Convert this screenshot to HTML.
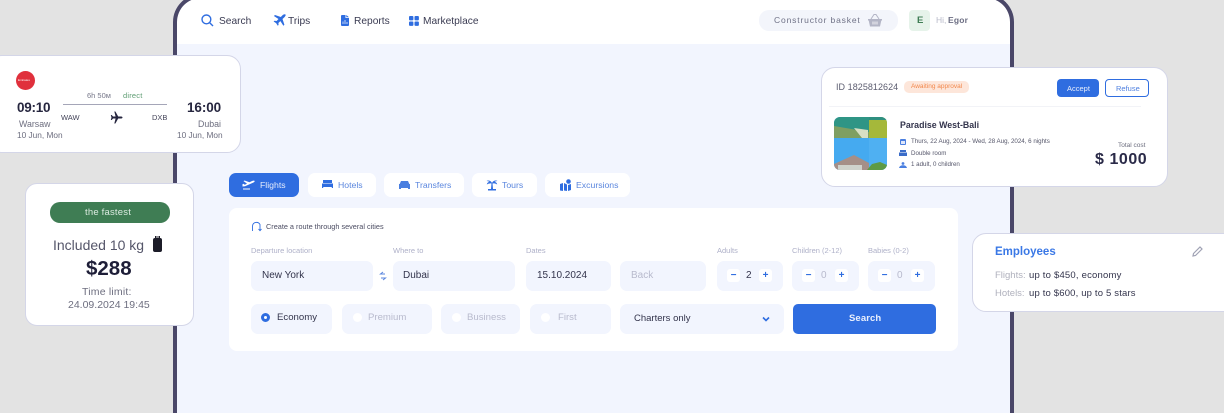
<!DOCTYPE html>
<html lang="en"><head><meta charset="utf-8"><title>Travel booking</title>
<style>
*{box-sizing:border-box;margin:0;padding:0}
html,body{width:1224px;height:413px;overflow:hidden;background:#e3e3e3}
body{position:relative;font-family:"Liberation Sans",sans-serif;color:#26263f}
#w{position:absolute;left:0;top:0;width:1224px;height:413px;overflow:hidden;filter:blur(.35px)}
.a{position:absolute}
.t{position:absolute;white-space:nowrap;line-height:1}
.box{position:absolute;background:#f2f5fe;border-radius:7px}
.card{position:absolute;background:#fff;border:1px solid #d4d6e8}
.tab{position:absolute;top:173px;height:24px;background:#fff;border-radius:7px}
.tl{position:absolute;white-space:nowrap;line-height:1;top:181px;font-size:8.700px;color:#5a86de}
.lb{position:absolute;white-space:nowrap;line-height:1;font-size:7.5px;color:#aeb0c8;top:247px}
.inp{position:absolute;white-space:nowrap;line-height:1;font-size:10px;color:#33344c}
.cl{font-size:9.6px;top:313px}
.sq{position:absolute;width:13px;height:13px;background:#fff;border-radius:3px;color:#2f6de0;font-size:10px;line-height:13px;text-align:center;font-weight:bold}
.rd{position:absolute;width:9px;height:9px;border-radius:50%;background:#fff;top:313px}
.nav{position:absolute;white-space:nowrap;line-height:1;top:17px;font-size:10.2px;color:#3a3b52}
svg{position:absolute;display:block}
</style></head><body><div id="w">

<!-- device frame -->
<div class="a" style="left:173px;top:-6px;width:841px;height:419px;background:#fff;border:4px solid #4a4768;border-bottom:0;border-radius:28px 28px 0 0"></div>
<div class="a" style="left:177px;top:44px;width:833px;height:369px;background:#f2f5fe"></div>

<!-- nav -->
<svg style="left:201px;top:14px" width="13" height="13" viewBox="0 0 13 13" fill="none" stroke="#2f6de0" stroke-width="1.4"><circle cx="5.4" cy="5.4" r="4.4"/><path d="M8.7 8.7L12 12"/></svg>
<div class="nav" style="left:219px">Search</div>
<svg style="left:273px;top:14px" width="13" height="13" viewBox="0 0 13 13" fill="#2f6de0"><path d="M12.5.5c-.8-.6-2-.2-3 .8L7.8 3 2 1 .9 2l4.6 3L3.6 7 1.5 6.7.6 7.5l2.5 1.6 1.7 2.7.8-.9L5.4 9l2-1.9 3 4.700 1-1.100L9.500 5l1.900-1.800c1-1 1.600-2.100 1.100-2.700z"/></svg>
<div class="nav" style="left:288px">Trips</div>
<svg style="left:341px;top:15px" width="8" height="11" viewBox="0 0 8 11" fill="#2f6de0"><path d="M1 0h3.500v3h3.500v7a1 1 0 0 1-1 1H1a1 1 0 0 1-1-1V1a1 1 0 0 1 1-1zM5.300 0L8 2.300H5.300z"/><path d="M2 9V6.500M4 9V5M6 9V7" stroke="#fff" stroke-width=".7"/></svg>
<div class="nav" style="left:354px">Reports</div>
<svg style="left:409px;top:16px" width="10" height="10" viewBox="0 0 10 10" fill="#2f6de0"><rect width="4.400" height="4.400" rx="1"/><rect x="5.500" width="4.400" height="4.400" rx="1"/><rect y="5.500" width="4.400" height="4.400" rx="1"/><rect x="5.500" y="5.500" width="4.400" height="4.400" rx="1"/></svg>
<div class="nav" style="left:423px">Marketplace</div>

<div class="a" style="left:759px;top:10px;width:139px;height:21px;background:#f3f5fb;border-radius:10px"></div>
<div class="t" style="left:774px;top:16px;font-size:8.500px;color:#6f7186;letter-spacing:.85px">Constructor basket</div>
<svg style="left:868px;top:14px" width="14" height="13" viewBox="0 0 14 13" fill="#b3b5c6"><path d="M0 5h14v1.500h-.7L12 12.500H2L.7 6.500H0z"/><path d="M3 5l3-4.500h2L11 5" fill="none" stroke="#b3b5c6"/><path d="M5 7.500v3M7 7.500v3M9 7.500v3" stroke="#fff" stroke-width=".8"/></svg>
<div class="a" style="left:909px;top:10px;width:21px;height:21px;background:#e6f3ea;border-radius:4px"></div>
<div class="t" style="left:917px;top:16px;font-size:9.500px;font-weight:bold;color:#3f7d54">E</div>
<div class="t" style="left:936px;top:16px;font-size:8.500px;color:#b9bbca">Hi,</div>
<div class="t" style="left:948px;top:16px;font-size:8.500px;font-weight:bold;color:#6c6e83;letter-spacing:.2px">Egor</div>

<!-- tabs -->
<div class="tab" style="left:229px;width:70px;background:#2f6de0"></div>
<svg style="left:242px;top:179px" width="13" height="11" viewBox="0 0 13 11" fill="#fff"><path d="M.5 7.500l2.500-.3 8.500-3.700c1-.5 1.500-1.200.9-1.700-.6-.4-1.600-.1-2.600.3L7.500 3.300 2.500 1.500l-1 .6 3.500 2.500L2.800 5.700 1.300 4.800l-.8.4zM1 9.500h7v1H1z"/></svg>
<div class="tl" style="left:260px;color:#e6edfc">Flights</div>

<div class="tab" style="left:308px;width:68px"></div>
<svg style="left:322px;top:180px" width="11" height="9" viewBox="0 0 11 9" fill="#2f6de0"><path d="M1 0h9v3H1zM0 3.500h11V8H9.800V7H1.200v1H0z"/></svg>
<div class="tl" style="left:338px">Hotels</div>

<div class="tab" style="left:384px;width:80px"></div>
<svg style="left:399px;top:180px" width="11" height="10" viewBox="0 0 11 10" fill="#4a7fe0"><path d="M2 1h7l1.300 3H11v5H9V8H2v1H0V4h.7z"/></svg>
<div class="tl" style="left:415px">Transfers</div>

<div class="tab" style="left:472px;width:65px"></div>
<svg style="left:486px;top:179px" width="12" height="12" viewBox="0 0 12 12" fill="#2f6de0"><path d="M6 4C5 1.500 2 1 .5 2 2 2 3 2.500 3.500 3 2 3 1 4 .8 5.500 2.500 4.500 4.500 4.200 5.500 4.500L5 10H2v1.500h8V10H7l-.5-5.500c1-.3 3-.2 4.700 1C11 4 10 3 8.500 3 9 2.500 10 2 11.500 2 10 1 7 1.500 6 4z"/></svg>
<div class="tl" style="left:502px">Tours</div>

<div class="tab" style="left:545px;width:85px"></div>
<svg style="left:560px;top:179px" width="11" height="12" viewBox="0 0 11 12" fill="#2f6de0"><path d="M0 5l3-1v8l-3-.5zM4 4l3 1.500V12l-3-.500zM8 6l3-1v6l-3 1z"/><circle cx="8.500" cy="2.500" r="2.300"/></svg>
<div class="tl" style="left:576px">Excursions</div>

<!-- form -->
<div class="a" style="left:229px;top:208px;width:729px;height:143px;background:#fff;border-radius:8px"></div>
<svg style="left:251px;top:221px" width="11" height="11" viewBox="0 0 11 11" fill="none" stroke="#2f6de0" stroke-width=".9"><path d="M1.500 10V5a4 4 0 0 1 7.500-1.500V9"/><path d="M7.500 8L9 9.700 10.500 8"/></svg>
<div class="t" style="left:266px;top:223px;font-size:7.300px;color:#4c4d63">Create a route through several cities</div>

<div class="lb" style="left:251px">Departure location</div>
<div class="lb" style="left:393px">Where to</div>
<div class="lb" style="left:526px">Dates</div>
<div class="lb" style="left:717px">Adults</div>
<div class="lb" style="left:792px">Children (2-12)</div>
<div class="lb" style="left:868px">Babies (0-2)</div>

<div class="box" style="left:251px;top:261px;width:122px;height:30px"></div>
<div class="inp" style="left:262px;top:271px">New York</div>
<svg style="left:379px;top:271px" width="8" height="10" viewBox="0 0 8 10" fill="none" stroke="#5a86de" stroke-width="1"><path d="M4 1L1.500 3H6M4 9l2.500-2H2"/></svg>
<div class="box" style="left:393px;top:261px;width:122px;height:30px"></div>
<div class="inp" style="left:403px;top:271px">Dubai</div>
<div class="box" style="left:526px;top:261px;width:85px;height:30px"></div>
<div class="inp" style="left:537px;top:271px">15.10.2024</div>
<div class="box" style="left:620px;top:261px;width:86px;height:30px"></div>
<div class="inp" style="left:631px;top:271px;color:#b8bacd">Back</div>

<div class="box" style="left:717px;top:261px;width:66px;height:30px"></div>
<div class="sq" style="left:727px;top:269px">−</div><div class="inp" style="left:746px;top:271px">2</div><div class="sq" style="left:759px;top:269px">+</div>
<div class="box" style="left:792px;top:261px;width:67px;height:30px"></div>
<div class="sq" style="left:802px;top:269px">−</div><div class="inp" style="left:821px;top:271px;color:#b8bacd">0</div><div class="sq" style="left:835px;top:269px">+</div>
<div class="box" style="left:868px;top:261px;width:67px;height:30px"></div>
<div class="sq" style="left:878px;top:269px">−</div><div class="inp" style="left:897px;top:271px;color:#b8bacd">0</div><div class="sq" style="left:911px;top:269px">+</div>

<div class="box" style="left:251px;top:304px;width:81px;height:30px"></div>
<div class="a" style="left:261px;top:313px;width:9px;height:9px;border-radius:50%;background:#fff;border:3px solid #2f6de0"></div>
<div class="inp cl" style="left:277px">Economy</div>
<div class="box" style="left:342px;top:304px;width:90px;height:30px"></div>
<div class="rd" style="left:353px"></div><div class="inp cl" style="left:368px;color:#b8bacd">Premium</div>
<div class="box" style="left:441px;top:304px;width:79px;height:30px"></div>
<div class="rd" style="left:452px"></div><div class="inp cl" style="left:467px;color:#b8bacd">Business</div>
<div class="box" style="left:530px;top:304px;width:81px;height:30px"></div>
<div class="rd" style="left:541px"></div><div class="inp cl" style="left:558px;color:#b8bacd">First</div>
<div class="box" style="left:620px;top:304px;width:164px;height:30px"></div>
<div class="inp" style="left:634px;top:314px;font-size:9.500px">Charters only</div>
<svg style="left:762px;top:316px" width="8" height="6" viewBox="0 0 8 6" fill="none" stroke="#2f6de0" stroke-width="1.600"><path d="M1 1.500l3 3 3-3"/></svg>
<div class="a" style="left:793px;top:304px;width:143px;height:30px;background:#2f6de0;border-radius:5px"></div>
<div class="t" style="left:849px;top:314px;font-size:9.500px;font-weight:bold;color:#eaf0fd;letter-spacing:.1px">Search</div>

<!-- flight card -->
<div class="card" style="left:-12px;top:55px;width:253px;height:98px;border-radius:14px"></div>
<div class="a" style="left:16px;top:71px;width:19px;height:19px;border-radius:50%;background:#e0303c"></div>
<div class="t" style="left:18px;top:79px;font-size:3px;color:#fff">Emirates</div>
<div class="t" style="left:17px;top:101px;font-size:13.500px;font-weight:bold;color:#26263f;letter-spacing:-.25px">09:10</div>
<div class="t" style="left:19px;top:120px;font-size:8.800px;color:#6d6e7f">Warsaw</div>
<div class="t" style="left:17px;top:131px;font-size:8.300px;color:#6d6e7f">10 Jun, Mon</div>
<div class="t" style="left:87px;top:92px;font-size:7.500px;color:#77788a">6h 50м</div>
<div class="t" style="left:123px;top:92px;font-size:7.500px;color:#5d9c72;letter-spacing:.2px">direct</div>
<div class="a" style="left:63px;top:104px;width:104px;height:1px;background:#a5a6b8"></div>
<div class="t" style="left:61px;top:114px;font-size:7.500px;color:#44455a">WAW</div>
<div class="t" style="left:152px;top:114px;font-size:7.500px;color:#44455a">DXB</div>
<svg style="left:110px;top:111px" width="13" height="13" viewBox="0 0 13 13" fill="#26263f"><path d="M12.500 6.500c0-.7-.8-1-1.700-1H8.200L5.400.5H4.300l1.300 5H3L1.700 4H.8l.7 2.500L.8 9h.9L3 7.500h2.600l-1.300 5h1.100l2.800-5h2.600c.9 0 1.700-.300 1.700-1z"/></svg>
<div class="t" style="left:187px;top:101px;font-size:13.500px;font-weight:bold;color:#26263f;letter-spacing:-.1px">16:00</div>
<div class="t" style="left:198px;top:120px;font-size:8.800px;color:#6d6e7f">Dubai</div>
<div class="t" style="left:177px;top:131px;font-size:8.300px;color:#6d6e7f">10 Jun, Mon</div>

<!-- fastest card -->
<div class="card" style="left:25px;top:183px;width:169px;height:143px;border-radius:12px"></div>
<div class="a" style="left:50px;top:202px;width:120px;height:21px;background:#3f7d54;border-radius:10px"></div>
<div class="t" style="left:85px;top:208px;font-size:9.500px;color:#dcebe1;letter-spacing:.2px">the fastest</div>
<div class="t" style="left:53px;top:238px;font-size:14px;color:#55566a">Included 10 kg</div>
<svg style="left:152px;top:236px" width="11" height="16" viewBox="0 0 11 16" fill="#1c1c28"><path d="M3.500 0h4v2h-4z" fill="none" stroke="#1c1c28"/><rect x="1" y="2" width="9" height="14" rx="2"/></svg>
<div class="t" style="left:86px;top:259px;font-size:20.500px;font-weight:bold;color:#1e1e38">$288</div>
<div class="t" style="left:82px;top:287px;font-size:10.500px;color:#6d6e7f;letter-spacing:.2px">Time limit:</div>
<div class="t" style="left:68px;top:300px;font-size:10.500px;color:#6d6e7f">24.09.2024 19:45</div>

<!-- approval card -->
<div class="card" style="left:821px;top:67px;width:347px;height:120px;border-radius:14px"></div>
<div class="t" style="left:836px;top:83px;font-size:9px;color:#5c5d70;letter-spacing:.05px">ID 1825812624</div>
<div class="a" style="left:904px;top:81px;width:65px;height:12px;background:#fde6da;border-radius:5px"></div>
<div class="t" style="left:911px;top:84px;font-size:6.500px;color:#f2874b">Awaiting approval</div>
<div class="a" style="left:1057px;top:79px;width:42px;height:18px;background:#2f6de0;border-radius:4px"></div>
<div class="t" style="left:1067px;top:85px;font-size:7.500px;color:#e6edfc">Accept</div>
<div class="a" style="left:1105px;top:79px;width:44px;height:18px;background:#fff;border:1px solid #2f6de0;border-radius:4px"></div>
<div class="t" style="left:1116px;top:85px;font-size:7.500px;color:#4f80e0">Refuse</div>
<div class="a" style="left:829px;top:106px;width:312px;height:1px;background:#f2f3f7"></div>
<svg style="left:834px;top:117px" width="53" height="53" viewBox="0 0 53 53"><defs><clipPath id="c"><rect width="53" height="53" rx="6"/></clipPath></defs><g clip-path="url(#c)"><rect width="53" height="53" fill="#45aaf0"/><rect x="35" y="21" width="18" height="32" fill="#4fb0f2"/><rect width="35" height="21" fill="#2f9585"/><path d="M0 9L35 15V21H0z" fill="#7f9f62"/><path d="M20 11L28 21H34V13z" fill="#d8dfc4"/><rect x="35" width="18" height="21" fill="#a5b83a"/><rect x="35" width="18" height="3" fill="#2f8f80"/><path d="M0 47L20 38 35 46V53H0z" fill="#a58f88"/><path d="M4 48H28V53H4z" fill="#cfd2cc"/><path d="M33 53L38 47 46 45 53 48V53z" fill="#5e9a45"/></g></svg>
<div class="t" style="left:900px;top:121px;font-size:8.800px;font-weight:bold;color:#33344c">Paradise West-Bali</div>
<svg style="left:900px;top:139px" width="6" height="6" viewBox="0 0 6 6"><rect width="6" height="6" rx="1" fill="#4a7fe0"/><rect x="1" y="2" width="4" height="3" fill="#dfe7fa"/></svg>
<div class="t" style="left:911px;top:139px;font-size:6.200px;color:#55566a">Thurs, 22 Aug, 2024 - Wed, 28 Aug, 2024, 6 nights</div>
<svg style="left:899px;top:150px" width="8" height="6" viewBox="0 0 8 6" fill="#3a6cc8"><path d="M1 0h6v2H1zM0 2.500h8V6H0z"/></svg>
<div class="t" style="left:911px;top:151px;font-size:6.200px;color:#55566a">Double room</div>
<svg style="left:899px;top:162px" width="8" height="6" viewBox="0 0 8 6" fill="#4a7fe0"><circle cx="4" cy="1.500" r="1.400"/><path d="M0 6c.5-2 2-2.800 4-2.800S7.500 4 8 6z"/></svg>
<div class="t" style="left:911px;top:162px;font-size:6.200px;color:#55566a">1 adult, 0 children</div>
<div class="t" style="left:1118px;top:143px;font-size:6.500px;color:#6d6e7f">Total cost</div>
<div class="t" style="left:1095px;top:152px;font-size:16px;font-weight:bold;color:#2a2a48;letter-spacing:.55px">$ 1000</div>

<!-- employees card -->
<div class="card" style="left:972px;top:233px;width:270px;height:79px;border-radius:14px"></div>
<div class="t" style="left:995px;top:247px;font-size:11.500px;font-weight:bold;color:#3a78e6">Employees</div>
<svg style="left:1192px;top:246px" width="11" height="11" viewBox="0 0 11 11" fill="none" stroke="#a0a2b4" stroke-width="1.200"><path d="M1 10l.5-2.500L8 1l2 2-6.500 6.500z"/></svg>
<div class="t" style="left:995px;top:271px;font-size:9.500px;color:#b0b1bd">Flights:</div>
<div class="t" style="left:1029px;top:271px;font-size:9.500px;color:#33344c;letter-spacing:.2px">up to $450, economy</div>
<div class="t" style="left:995px;top:289px;font-size:9.500px;color:#b0b1bd">Hotels:</div>
<div class="t" style="left:1029px;top:289px;font-size:9.500px;color:#33344c;letter-spacing:.17px">up to $600, up to 5 stars</div>

</div></body></html>
